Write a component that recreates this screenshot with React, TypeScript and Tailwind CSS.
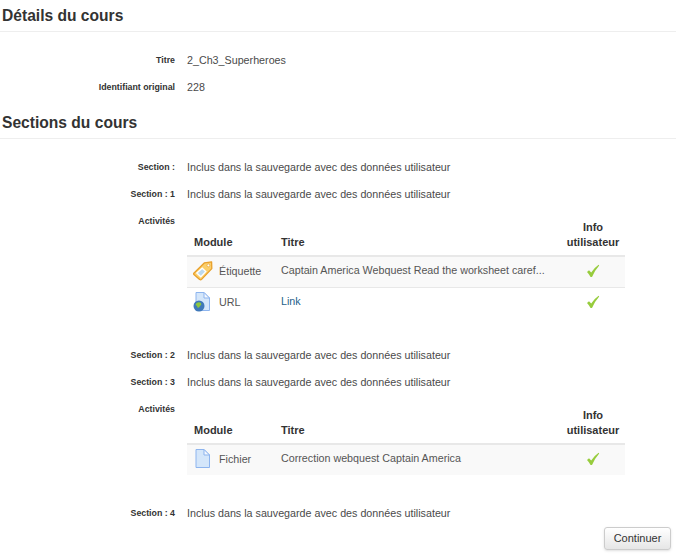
const font = "font-['Liberation_Sans',Arial,sans-serif]";

function Check() {
  return (
    <svg width="14" height="14" viewBox="0 0 14 14" className="mx-auto block">
      <path d="M1 8 L3 6.2 L5.2 8.6 Q8 4 12.6 .8 L13.2 1.4 Q9 6 6 13 L4.6 13 Q3 10 1 8 Z" fill="#97cc3d" />
    </svg>
  );
}

function LabelIcon() {
  return (
    <svg width="20" height="20" viewBox="0 0 20 20">
      <path d="M.8 12.2 L11.5 1.8 L18.6 .8 L18.8 7.6 L8.6 18.4 Q7.6 19.4 6.6 18.4 L1.2 13.8 Q.3 13 .8 12.2 Z" fill="#fbcf6b" stroke="#e8a02c" strokeWidth="1.3" strokeLinejoin="round" />
      <path d="M3.8 12 L9.2 7.2 L12.8 10.6 L7.8 15.8 Z" fill="#bcd9ee" stroke="#fff" strokeWidth="1.3" />
      <circle cx="15.4" cy="4.4" r="1.4" fill="#fff" stroke="#e8a02c" strokeWidth=".7" />
    </svg>
  );
}

function FileIcon({ globe = false }: { globe?: boolean }) {
  return (
    <svg width="18" height="20" viewBox="0 0 18 20">
      <path d="M3 .5 H11 L16.5 6 V18.5 H3 Z" fill="#d4e6fa" stroke="#8db4ee" strokeWidth="1" />
      <path d="M11 .5 V6 H16.5 Z" fill="#f4f8fe" stroke="#8db4ee" strokeWidth="1" strokeLinejoin="round" />
      {globe && (
        <>
          <circle cx="6" cy="14" r="5.5" fill="#3f78b8" />
          <path d="M3.5 11 Q6 9.5 8 11 Q9 13 7 14 Q6 16.5 4.5 15.5 Q4.5 13.5 2.5 13 Z" fill="#8cc63f" />
        </>
      )}
    </svg>
  );
}

function Row({ label, value }: { label: string; value: string }) {
  return (
    <div className="flex h-[27px] items-center">
      <div className="w-[175px] text-right text-[8.8px] font-bold text-[#333]">{label}</div>
      <div className="ml-3 text-[10.73px] text-[#4a4a4a]">{value}</div>
    </div>
  );
}

function Head({ children }: { children: string }) {
  return (
    <div className="border-b border-[#eee] pl-0.5 text-[15.6px] leading-[31px] font-bold text-[#333]">{children}</div>
  );
}

type Activity = { icon: React.ReactNode; module: string; title: string; link?: boolean };

function Activities({ rows }: { rows: Activity[] }) {
  return (
    <div className="flex">
      <div className="w-[175px] pt-[7px] text-right text-[8.8px] font-bold text-[#333]">Activités</div>
      <table className="ml-3 w-[438px] table-fixed border-collapse text-[10.73px] text-[#555]">
        <thead>
          <tr className="border-b-2 border-[#e8e8e8] text-[11px] text-[#333]">
            <th className="w-[94px] pl-[7px] pb-[5px] text-left align-bottom font-bold">Module</th>
            <th className="pb-[5px] text-left align-bottom font-bold">Titre</th>
            <th className="w-[64px] pt-[12px] pb-[5px] leading-[15px] font-bold">
              Info
              <br />
              utilisateur
            </th>
          </tr>
        </thead>
        <tbody>
          {rows.map((r, i) => (
            <tr key={r.module} className={`h-[31px] border-b border-[#e8e8e8] last:border-b-0 ${i % 2 === 0 ? "bg-[#f9f9f9]" : ""}`}>
              <td className="pl-[6px] pb-[2px]">
                <div className="flex items-center gap-[6px]">
                  <span className="w-[20px] shrink-0">{r.icon}</span>
                  {r.module}
                </div>
              </td>
              <td className={`pb-[3px] ${r.link ? "text-[#1f5f8b]" : ""}`}>{r.title}</td>
              <td className="pb-[2px]">
                <Check />
              </td>
            </tr>
          ))}
        </tbody>
      </table>
    </div>
  );
}

export default function App() {
  const saved = "Inclus dans la sauvegarde avec des données utilisateur";
  return (
    <div className={`h-[556px] w-[676px] overflow-hidden bg-white ${font}`}>
      <Head>Détails du cours</Head>
      <div className="mt-[15px]">
        <Row label="Titre" value="2_Ch3_Superheroes" />
        <Row label="Identifiant original" value="228" />
      </div>
      <div className="mt-[6px]">
        <Head>Sections du cours</Head>
      </div>
      <div className="mt-[15px]">
        <Row label="Section :" value={saved} />
        <Row label="Section : 1" value={saved} />
        <Activities
          rows={[
            { icon: <LabelIcon />, module: "Étiquette", title: "Captain America Webquest Read the worksheet caref..." },
            { icon: <FileIcon globe />, module: "URL", title: "Link", link: true },
          ]}
        />
        <div className="mt-[24px]">
          <Row label="Section : 2" value={saved} />
          <Row label="Section : 3" value={saved} />
        </div>
        <Activities rows={[{ icon: <FileIcon />, module: "Fichier", title: "Correction webquest Captain America" }]} />
        <div className="mt-[25px]">
          <Row label="Section : 4" value={saved} />
        </div>
      </div>
      <div className="flex justify-end pr-[5px]">
        <button className="h-[23px] w-[67px] rounded-[3px] border border-[#ccc] bg-gradient-to-b from-white to-[#e6e6e6] text-[11px] text-[#333] shadow-sm">
          Continuer
        </button>
      </div>
    </div>
  );
}
